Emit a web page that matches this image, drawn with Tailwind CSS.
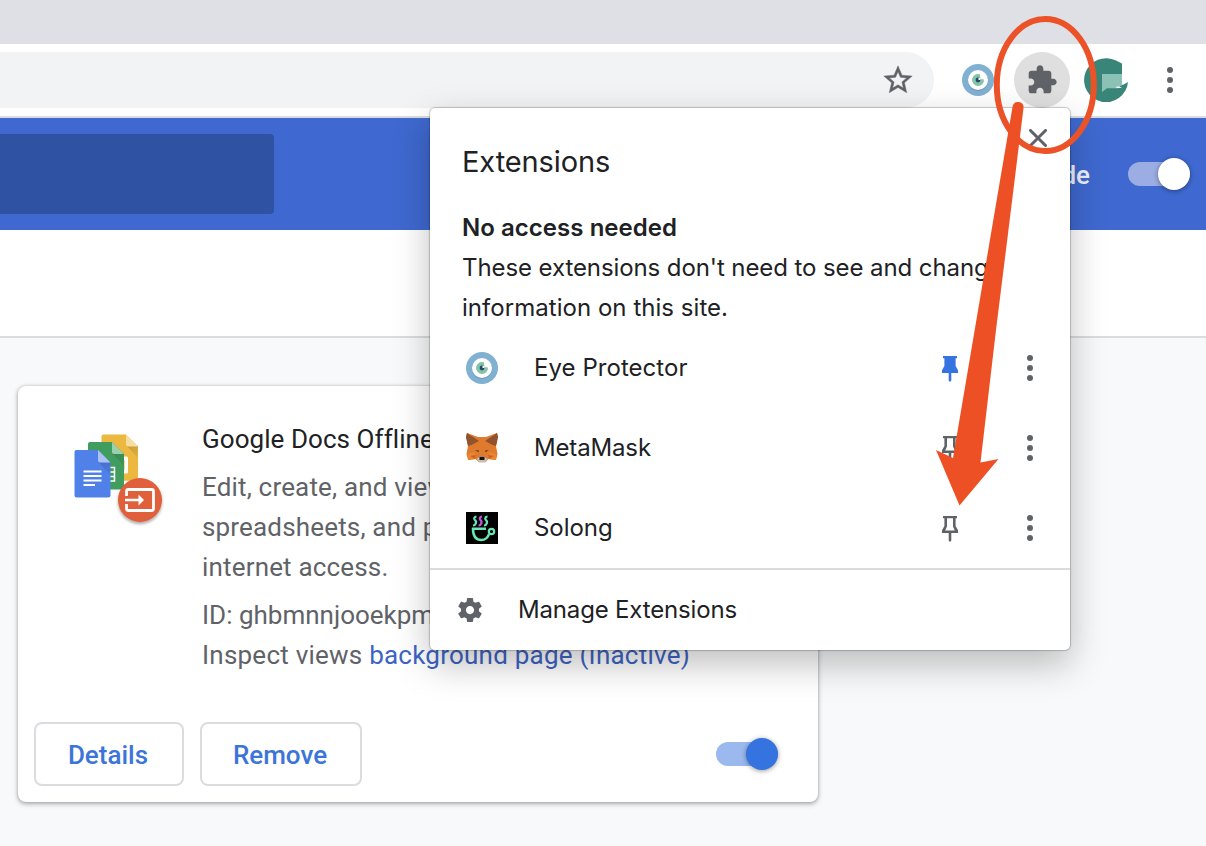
<!DOCTYPE html>
<html lang="en">
<head>
<meta charset="utf-8">
<title>Extensions</title>
<script src="https://cdn.jsdelivr.net/npm/@tailwindcss/browser@4"></script>
</head>
<body class="relative h-[846px] w-[1206px] overflow-hidden bg-[#f8f9fa] font-[Roboto,sans-serif] text-[26px] text-[#5f6368]">
<svg class="hidden">
  <symbol id="eye" viewBox="0 0 32 32">
    <circle cx="16" cy="16" r="16" fill="#80b0d2"/>
    <circle cx="16" cy="16.8" r="10.2" fill="#6b99bb"/>
    <circle cx="16" cy="16" r="10" fill="#fff"/>
    <path d="M18 10.300A6 6 0 1 0 22 15.500L19 15L18 13Z" fill="#84c2b0"/>
    <circle cx="16" cy="16" r="2.400" fill="#2c4a5c"/>
    <rect x="16.500" y="14" width="2" height="2" fill="#fff"/>
  </symbol>
  <symbol id="pin" viewBox="0 0 16 26">
    <path d="M1 0H15V2.200H13.600V10L16 14.200V17H9.300V24.600L8 26L6.700 24.600V17H0V14.200L2.400 10V2.200H1Z"/>
  </symbol>
  <symbol id="pin-outline" viewBox="0 0 16 26">
    <path fill-rule="evenodd" d="M1 0H15V2.200H13.600V10L16 14.200V17H9.300V24.600L8 26L6.700 24.600V17H0V14.200L2.400 10V2.200H1ZM5 2.200V10.600L3.200 14.400H12.800L11 10.600V2.200Z"/>
  </symbol>
  <symbol id="dots" viewBox="0 0 6 26">
    <circle cx="3" cy="3" r="3"/><circle cx="3" cy="13" r="3"/><circle cx="3" cy="23" r="3"/>
  </symbol>
</svg>

<div class="h-11 bg-[#dee0e5]"></div>
<header class="flex h-[74px] items-center border-b-2 border-[#d9dbdd] bg-white">
  <div class="flex h-14 w-[934px] items-center justify-end rounded-r-full bg-[#f1f3f4] pr-[19px]">
    <svg class="size-[34px]" viewBox="0 0 24 24" fill="#5f6368" stroke="#5f6368" stroke-width=".3"><path d="M22 9.240l-7.190-.62L12 2 9.190 8.630 2 9.240l5.460 4.730L5.820 21 12 17.270 18.180 21l-1.630-7.030L22 9.240zM12 15.400l-3.760 2.270 1-4.280-3.320-2.880 4.380-.38L12 6.100l1.710 4.040 4.380.38-3.320 2.880 1 4.280L12 15.400z"/></svg>
  </div>
  <svg class="ml-7 size-8"><use href="#eye"/></svg>
  <div class="ml-5 flex size-14 items-center justify-center rounded-full bg-[#dfdfe0]">
    <svg class="size-8" viewBox="0 0 24 24" fill="#5f6368"><path d="M20.500 11H19V7c0-1.100-.9-2-2-2h-4V3.500C13 2.120 11.880 1 10.500 1S8 2.120 8 3.500V5H4c-1.100 0-1.990.9-1.990 2v3.800H3.500c1.490 0 2.700 1.210 2.700 2.700s-1.210 2.700-2.700 2.700H2V20c0 1.100.9 2 2 2h3.800v-1.500c0-1.490 1.210-2.700 2.700-2.700 1.490 0 2.700 1.210 2.700 2.700V22H17c1.100 0 2-.9 2-2v-4h1.500c1.380 0 2.500-1.120 2.500-2.500S21.880 11 20.500 11z"/></svg>
  </div>
  <svg class="ml-3.5 size-11" viewBox="0 0 44 44">
    <path d="M38 5.500L32 2.500A22 22 0 1 0 44 24C41.500 26 38 27 34 28L38 30H18V16H38V5.500Z" fill="#398678"/>
    <path d="M18 16H38V27.500L31.500 29.200L35 30.200H23L18 34Z" fill="#8cc2b5"/>
    <path d="M31.500 29.300L36 28.200L34.500 30Z" fill="#fff"/>
  </svg>
  <svg class="ml-[39px] h-[26px] w-1.5" fill="#5f6368"><use href="#dots"/></svg>
</header>

<section class="flex h-28 items-center justify-between bg-[#3f69d0] pr-4">
  <div class="h-20 w-[274px] rounded-r-[4px] bg-[#2f52a3]"></div>
  <div class="flex items-center gap-[38px]">
    <span class="pt-0.5 font-medium text-[#eef2fb]">Developer mode</span>
    <div class="flex h-6 w-[62px] items-center justify-end rounded-full bg-[#9badE2]">
      <div class="size-8 shrink-0 rounded-full bg-white shadow-[0_1px_5px_rgba(0,0,0,0.4)]"></div>
    </div>
  </div>
</section>
<div class="h-[108px] border-b-2 border-[#dadce0] bg-white"></div>

<article class="mt-12 ml-[18px] flex h-[416px] w-[800px] flex-col justify-between rounded-lg bg-white p-4 pr-10 shadow-[0_2px_5px_rgba(60,64,67,0.4),0_0_3px_rgba(60,64,67,0.25)]">
  <div class="flex pt-[18px] pl-10">
    <svg class="mt-[14px] h-[92px] w-[92px] shrink-0" viewBox="0 0 92 92">
      <defs>
        <linearGradient id="sh" x1="0" y1="0" x2="1" y2="1"><stop offset="0" stop-color="#3f3f3f" stop-opacity=".22"/><stop offset="1" stop-color="#000" stop-opacity=".03"/></linearGradient>
        <filter id="soft" x="-20%" y="-20%" width="150%" height="150%"><feDropShadow dx="0" dy="2" stdDeviation="1.500" flood-opacity=".35"/></filter>
      </defs>
      <path d="M29.500 .5H52L64 12.500V45Q64 47 62 47H29.500Q27.500 47 27.500 45V2.500Q27.500 .5 29.500 .5Z" fill="#ecb83f"/>
      <path d="M52 11H64V24Z" fill="url(#sh)"/>
      <path d="M52 .5L64 12.500H54Q52 12.500 52 10.500Z" fill="#f6dda0"/>
      <path d="M47 22.500H52.500Q54 22.500 54 24V38Q54 39.500 52.500 39.500H47V36H50.500V26H47Z" fill="#fff"/>
      <path d="M49 47.500H55" stroke="#fff" stroke-width="1.500"/>
      <path d="M16 8H38L50 20V53.500Q50 55.500 48 55.500H16Q14 55.500 14 53.500V10Q14 8 16 8Z" fill="#409d5e"/>
      <path d="M38 19H50V32Z" fill="url(#sh)"/>
      <path d="M38 8L50 20H40Q38 20 38 18Z" fill="#9bd0ad"/>
      <path d="M33 33.500H40.500V47H33M33 38H40M33 42.500H40" fill="none" stroke="#fff" stroke-width="1.500"/>
      <path d="M2.500 16H24L36.500 28.500V61Q36.500 63.500 34 63.500H2.500Q.5 63.500 .5 61.500V18Q.5 16 2.500 16Z" fill="#4f81e8"/>
      <path d="M24 27.500H36.500V41Z" fill="url(#sh)"/>
      <path d="M24 16L36.500 28.500H26Q24 28.500 24 26.500Z" fill="#a9c1f4"/>
      <path d="M9.500 37.500H27.500M9.500 42H27.500M9.500 46.500H27.500M9.500 51H21" stroke="#fff" stroke-width="2"/>
      <circle cx="66" cy="66" r="22" fill="#e0603a" filter="url(#soft)"/>
      <path d="M52.500 62V57.500Q52.500 55.500 54.500 55.500H77.500Q79.500 55.500 79.500 57.500V74.500Q79.500 76.500 77.500 76.500H54.500Q52.500 76.500 52.500 74.500V70" fill="none" stroke="#fff" stroke-width="2.800"/>
      <path d="M51 64.800H64.500V60.500L70 66L64.500 71.500V67.200H51Z" fill="#fff"/>
    </svg>
    <div class="ml-9 leading-10 whitespace-nowrap">
      <h2 class="-mt-px tracking-[0.06px] text-[#202124]">Google Docs Offline</h2>
      <p class="mt-2 w-[240px] overflow-hidden tracking-[0.17px]">Edit, create, and view your<br>spreadsheets, and pr<br>internet access.</p>
      <p class="mt-2 w-[240px] overflow-hidden">ID: ghbmnnjooekpm</p>
      <p class="tracking-[0.23px]">Inspect views <span class="text-[#3d64c6]">background page (Inactive)</span></p>
    </div>
  </div>
  <div class="flex items-center">
    <div class="flex h-16 w-[150px] items-center justify-center rounded-lg border-2 border-[#dadce0] pt-0.5 pr-0.5 font-medium text-[#3b75d9]">Details</div>
    <div class="ml-4 flex h-16 w-[162px] items-center justify-center rounded-lg border-2 border-[#dadce0] pt-0.5 pr-0.5 font-medium text-[#3b75d9]">Remove</div>
    <div class="ml-auto flex h-6 w-[62px] items-center justify-end rounded-full bg-[#9bb9ef]">
      <div class="size-8 shrink-0 rounded-full bg-[#3573e0] shadow-[0_1px_5px_rgba(0,0,0,0.4)]"></div>
    </div>
  </div>
</article>

<!-- Extensions menu -->
<div class="absolute top-[108px] left-[430px] flex h-[542px] w-[640px] flex-col rounded-[5px] bg-white font-[Inter,sans-serif] text-[24px] leading-10 text-[#202124] shadow-[0_0_1px_1px_rgba(0,0,0,0.2),0_14px_36px_rgba(0,0,0,0.26)]">
  <div class="flex justify-between pt-[21px] pr-[23px] pl-8">
    <h1 class="pt-[13px] text-[29px] tracking-[-0.1px]">Extensions</h1>
    <svg class="size-[18px]" viewBox="0 0 18 18" stroke="#5f6368" stroke-width="3" stroke-linecap="round"><path d="M1.500 1.500L16.500 16.500M16.500 1.500L1.500 16.500"/></svg>
  </div>
  <div class="mt-[26px] pl-8 whitespace-nowrap">
    <h3 class="font-semibold tracking-[0.04px]">No access needed</h3>
    <p class="tracking-[-0.09px]">These extensions don't need to see and change</p>
    <p class="tracking-[0.04px]">information on this site.</p>
  </div>
  <div class="flex h-20 items-center pr-[37px] pl-9">
    <svg class="size-8"><use href="#eye"/></svg>
    <span class="ml-9 flex-1 tracking-[0.05px]">Eye Protector</span>
    <svg class="mt-0.5 h-[26px] w-4" fill="#3573e0"><use href="#pin"/></svg>
    <svg class="ml-[69px] h-[26px] w-1.5" fill="#5f6368"><use href="#dots"/></svg>
  </div>
  <div class="flex h-20 items-center pr-[37px] pl-9">
    <svg class="size-8" viewBox="0 0 32 32">
      <path d="M1 1L12 5H20L31 1L32 5L30 14L31.500 22L30 28L22.500 27L19.500 30H12.500L9.500 27L2 28L.5 22L2 14L0 5Z" fill="#e07b2e"/>
      <path d="M1 1L13 9L5.500 13L2 14L0 5ZM31 1L19 9L26.500 13L30 14L32 5Z" fill="#8f5330"/>
      <path d="M2 22L9 20L10 27L2 28ZM30 22L23 20L22 27L30 28Z" fill="#e98632"/>
      <path d="M4 24L10 23L9 27ZM28 24L22 23L23 27Z" fill="#cc6228"/>
      <path d="M9 18L13 18.500L12.500 20.300ZM23 18L19 18.500L19.500 20.300Z" fill="#5a3a2c"/>
      <path d="M10.500 27L14 24.500H18L21.500 27L19 30.500H13Z" fill="#c9bcb0"/>
      <path d="M13.500 24.800H18.500V28H13.500Z" fill="#15181b"/>
    </svg>
    <span class="ml-9 flex-1 tracking-[-0.15px]">MetaMask</span>
    <svg class="mt-0.5 h-[26px] w-4" fill="#5f6368"><use href="#pin-outline"/></svg>
    <svg class="ml-[69px] h-[26px] w-1.5" fill="#5f6368"><use href="#dots"/></svg>
  </div>
  <div class="flex h-20 items-center pr-[37px] pl-9">
    <svg class="size-8" viewBox="0 0 32 32" fill="none" stroke-width="2.200">
      <path d="M0 0H32V32H0Z" fill="#000"/>
      <path d="M10.500 4.500Q7.500 5 8.500 7.500Q11 9.500 9.500 12Q9 13.500 7 13.500M21.500 4.500Q18.500 5 19.500 7.500Q22 9.500 20.500 12Q20 13.500 18 13.500" stroke="#68e6b8"/>
      <path d="M16 4.500Q13 5 14 7.500Q16.500 9.500 15 12Q14.500 13.500 12.500 13.500" stroke="#c356e0"/>
      <path d="M20 16.700H7Q7 28 15.500 28Q21 28 23 22.200" stroke="#68e6b8" stroke-width="2.500"/>
      <circle cx="25.500" cy="19.500" r="2.700" stroke="#68e6b8"/>
    </svg>
    <span class="ml-9 flex-1 tracking-[-0.05px]">Solong</span>
    <svg class="mt-0.5 h-[26px] w-4" fill="#5f6368"><use href="#pin-outline"/></svg>
    <svg class="ml-[69px] h-[26px] w-1.5" fill="#5f6368"><use href="#dots"/></svg>
  </div>
  <div class="flex flex-1 items-center border-t-2 border-[#dadbdc] pl-[25px]">
    <svg class="size-[30px]" viewBox="0 0 24 24" fill="#5f6368"><path d="M19.140 12.940c.04-.3.06-.61.06-.94 0-.32-.02-.64-.07-.94l2.030-1.580c.18-.14.23-.41.12-.61l-1.920-3.320c-.12-.22-.37-.29-.59-.22l-2.390.96c-.5-.38-1.030-.7-1.620-.94l-.36-2.540c-.04-.24-.24-.41-.48-.41h-3.840c-.24 0-.43.17-.47.41l-.36 2.540c-.59.24-1.130.57-1.620.94l-2.390-.96c-.22-.08-.47 0-.59.22L2.740 8.870c-.12.21-.08.47.12.61l2.030 1.580c-.05.3-.09.63-.09.94s.02.64.07.94l-2.030 1.580c-.18.14-.23.41-.12.61l1.920 3.320c.12.22.37.29.59.22l2.390-.96c.5.38 1.030.7 1.620.94l.36 2.540c.05.24.24.41.48.41h3.840c.24 0 .44-.17.47-.41l.36-2.540c.59-.24 1.130-.56 1.620-.94l2.390.96c.22.08.47 0 .59-.22l1.920-3.320c.12-.22.07-.47-.12-.61l-2.010-1.580zM12 15.300c-1.820 0-3.300-1.480-3.300-3.300s1.480-3.300 3.300-3.300 3.300 1.480 3.300 3.300-1.480 3.300-3.300 3.300z"/></svg>
    <span class="ml-[33px] tracking-[-0.17px]">Manage Extensions</span>
  </div>
</div>

<!-- Annotation: circled button and arrow -->
<svg class="pointer-events-none absolute inset-0 h-[846px] w-[1206px]" viewBox="0 0 1206 846">
  <ellipse cx="1045.300" cy="85" rx="48.500" ry="66" fill="none" stroke="#eb5227" stroke-width="6"/>
  <path d="M1012.500 107Q1013.500 101.500 1018.500 102Q1024 102.500 1023.500 108L1009.700 220L996 330L980.500 462.500L998.500 459L959.500 505.500L936 450L953 458L974.700 330L993.300 220Z" fill="#ee5025"/>
</svg>
</body>
</html>
